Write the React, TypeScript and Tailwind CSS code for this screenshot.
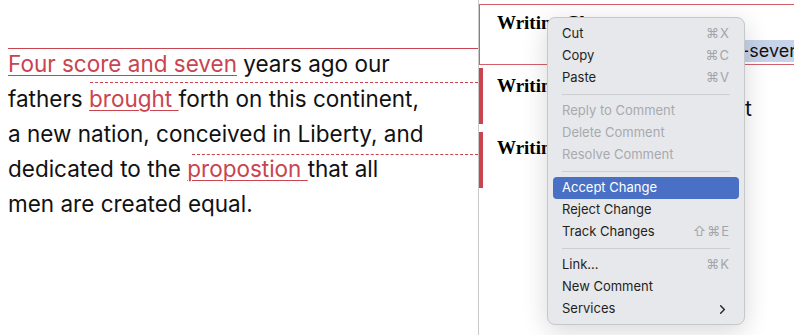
import { ChevronRight } from "lucide-react";

type Item = { label: string; key?: string; disabled?: boolean; active?: boolean; sub?: boolean };

const GROUPS: Item[][] = [
  [
    { label: "Cut", key: "⌘X" },
    { label: "Copy", key: "⌘C" },
    { label: "Paste", key: "⌘V" },
  ],
  [
    { label: "Reply to Comment", disabled: true },
    { label: "Delete Comment", disabled: true },
    { label: "Resolve Comment", disabled: true },
  ],
  [
    { label: "Accept Change", active: true },
    { label: "Reject Change" },
    { label: "Track Changes", key: "⇧⌘E" },
  ],
  [
    { label: "Link...", key: "⌘K" },
    { label: "New Comment" },
    { label: "Services", sub: true },
  ],
];

function Red({ children }: { children: React.ReactNode }) {
  return (
    <span className="text-[#c9444f] underline decoration-1 underline-offset-[3px]">{children}</span>
  );
}

function ContextMenu() {
  return (
    <div
      className="absolute left-[547px] top-[17px] w-[198px] rounded-[8px] border border-[#c6c7ca] bg-[#e7e8eb] px-[5px] pt-[5px] pb-[4px] text-[13px] shadow-[0_6px_26px_rgba(0,0,0,0.16)]"
      style={{ fontFamily: "Inter, 'Liberation Sans', sans-serif" }}
    >
      {GROUPS.map((g, gi) => (
        <div key={gi}>
          {gi > 0 && <div className="mx-[9px] my-[5px] h-px bg-[#cdced2]" />}
          {g.map((it) => (
            <div
              key={it.label}
              className={`flex h-[22px] items-center justify-between rounded-[4px] pl-[9px] pr-[9px] ${
                it.active ? "bg-[#4a70c6] text-white" : it.disabled ? "text-[#a8aaaf]" : "text-[#1f1f22]"
              }`}
            >
              <span>{it.label}</span>
              {it.key && <span className="text-[#a3a5aa] tracking-[1px]">{it.key}</span>}
              {it.sub && <ChevronRight size={15} strokeWidth={2.4} className="text-[#2a2a2d]" />}
            </div>
          ))}
        </div>
      ))}
    </div>
  );
}

export default function App() {
  return (
    <div className="relative h-[335px] w-[794px] overflow-hidden bg-white">
      <div className="flex h-full">
        {/* document text */}
        <div
          className="w-[478px] shrink-0 pl-[8px] pt-[46px] text-[22.5px] leading-[35px] text-[#111]"
          style={{ fontFamily: "Inter, 'Liberation Sans', sans-serif" }}
        >
          <div><Red>Four score and seven</Red> years ago our</div>
          <div>fathers <Red>brought </Red>forth on this continent,</div>
          <div>a new nation, conceived in Liberty, and</div>
          <div>dedicated to the <Red>propostion </Red>that all</div>
          <div>men are created equal.</div>
        </div>

        {/* balloon pane */}
        <div
          className="flex-1 overflow-hidden border-l border-[#c9c9c9] pt-[4px]"
          style={{ fontFamily: "'Liberation Serif', serif" }}
        >
          <div className="h-[61px] border border-r-0 border-[#d4606a] pl-[17px] pt-[6px] whitespace-nowrap">
            <div className="text-[19px] font-bold leading-[24px] text-black">Writing Changes</div>
            <div
              className="mt-[5px] flex text-[18px] leading-[22px] text-[#111]"
              style={{ fontFamily: "Inter, 'Liberation Sans', sans-serif" }}
            >
              <span className="w-[60px] shrink-0" />
              <span className="w-[184px] shrink-0 bg-[#c6d3ea]" />
              <span className="bg-[#c6d3ea] pr-[20px]">-seven</span>
            </div>
          </div>

          <div className="mt-[3px] h-[56px] border-l-[4px] border-[#c9444f] pl-[14px] pt-[6px] whitespace-nowrap">
            <div className="text-[19px] font-bold leading-[24px] text-black">Writing Changes</div>
            <div
              className="text-[21px] leading-[22px] text-[#111] pl-[248px]"
              style={{ fontFamily: "Inter, 'Liberation Sans', sans-serif" }}
            >
              t
            </div>
          </div>

          <div className="mt-[8px] h-[56px] border-l-[4px] border-[#c9444f] pl-[14px] pt-[4px] whitespace-nowrap">
            <div className="text-[19px] font-bold leading-[24px] text-black">Writing Changes</div>
          </div>
        </div>
      </div>

      {/* change connector lines */}
      <div className="absolute left-[8px] top-[48px] w-[470px] border-t border-[#c9444f]" />
      <div className="absolute left-[90px] top-[82px] w-[388px] border-t border-dashed border-[#c9444f]" />
      <div className="absolute left-[192px] top-[154px] w-[286px] border-t border-dashed border-[#c9444f]" />

      <ContextMenu />
    </div>
  );
}
